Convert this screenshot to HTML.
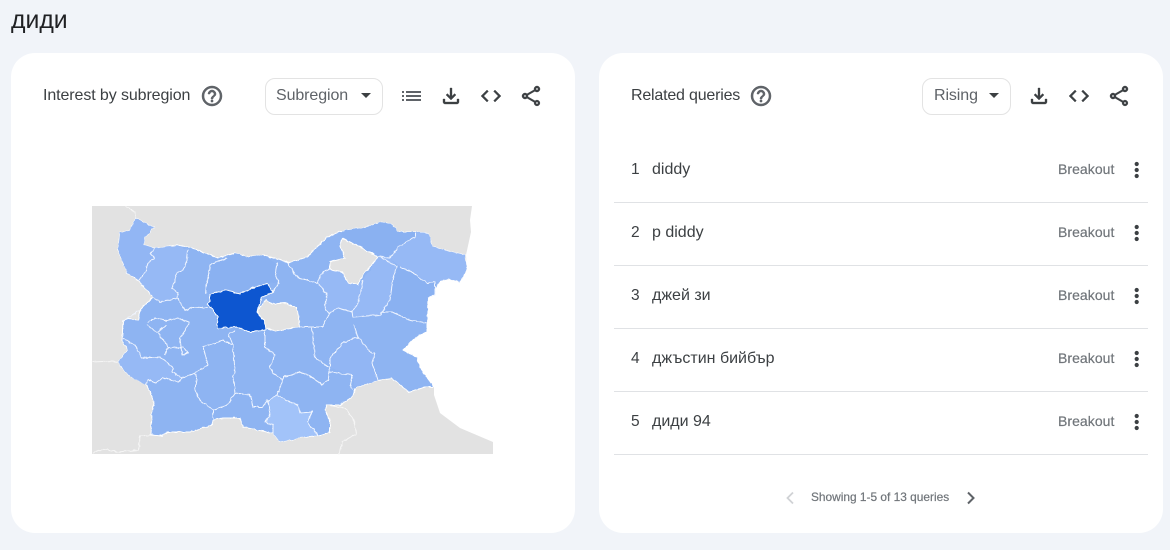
<!DOCTYPE html>
<html><head><meta charset="utf-8">
<style>
html,body{margin:0;padding:0;width:1170px;height:550px;overflow:hidden;background:#f1f4f9;font-family:"Liberation Sans","Noto Sans CJK JP",sans-serif;color:#3c4043}
.a{position:absolute;white-space:nowrap}
.card{position:absolute;top:53px;width:564px;height:480px;background:#fff;border-radius:24px}
.sel{position:absolute;top:78px;height:35px;border:1px solid #e3e3e3;border-radius:10px;background:#fff}
.tri{position:absolute;width:0;height:0;border-left:5px solid transparent;border-right:5px solid transparent;border-top:5px solid #3c4043}
.t{font-size:16px;line-height:20px;color:#3c4043;letter-spacing:-.1px;margin-top:1px}
.hr{position:absolute;left:614px;width:534px;height:1px;background:#e0e2e5}
.br{position:absolute;left:1058px;font-size:14px;line-height:20px;color:#70757a;white-space:nowrap;letter-spacing:.05px;-webkit-text-stroke:.2px #70757a}
.n{position:absolute;left:631px;font-size:15.5px;line-height:20px;color:#3c4043;margin-top:1px}
.q{position:absolute;left:652px;font-size:16px;line-height:20px;color:#3c4043;white-space:nowrap;margin-top:1px}
svg.i{position:absolute;width:24px;height:24px;top:84px}
svg.h path{stroke:#5f6368;stroke-width:.5}
svg.b path{stroke:#3c4043;stroke-width:.35}
</style></head><body>
<div class="a" style="left:11px;top:9px;font-size:24.8px;line-height:24px;color:#202124">диди</div>
<div class="card" style="left:11px"></div>
<div class="card" style="left:599px"></div>

<div class="a t" style="left:43px;top:85px">Interest by subregion</div>
<svg class="i h" style="left:200px" viewBox="0 0 24 24" fill="#5f6368"><path d="M11 18h2v-2h-2v2zm1-16C6.48 2 2 6.48 2 12s4.48 10 10 10 10-4.48 10-10S17.52 2 12 2zm0 18c-4.41 0-8-3.59-8-8s3.59-8 8-8 8 3.59 8 8-3.59 8-8 8zm0-14c-2.21 0-4 1.79-4 4h2c0-1.1.9-2 2-2s2 .9 2 2c0 2-3 1.75-3 5h2c0-2.25 3-2.5 3-5 0-2.21-1.79-4-4-4z"/></svg>
<div class="sel" style="left:265px;width:116px"></div>
<div class="a t" style="left:276px;top:85px;color:#5f6368">Subregion</div>
<div class="tri" style="left:361px;top:93px"></div>
<svg class="a" style="left:402px;top:90px" width="19" height="12" viewBox="0 0 19 12" fill="#5f6368"><rect x="0" y="1" width="2" height="2"/><rect x="4" y="1" width="15" height="2"/><rect x="0" y="5" width="2" height="2"/><rect x="4" y="5" width="15" height="2"/><rect x="0" y="9" width="2" height="2"/><rect x="4" y="9" width="15" height="2"/></svg>
<svg class="i b" style="left:439px" viewBox="0 0 24 24" fill="#3c4043"><path d="M18 15v3H6v-3H4v3c0 1.1.9 2 2 2h12c1.1 0 2-.9 2-2v-3h-2zm-1-4l-1.41-1.41L13 12.17V4h-2v8.17L8.41 9.59 7 11l5 5 5-5z"/></svg>
<svg class="i b" style="left:479px" viewBox="0 0 24 24" fill="#3c4043"><path d="M9.4 16.6L4.8 12l4.6-4.6L8 6l-6 6 6 6 1.4-1.4zm5.2 0l4.6-4.6-4.6-4.6L16 6l6 6-6 6-1.4-1.4z"/></svg>
<svg class="i b" style="left:519px" viewBox="0 0 24 24" fill="#3c4043"><path d="M18 16.08c-.76 0-1.44.3-1.96.77L8.91 12.7c.05-.23.09-.46.09-.7s-.04-.47-.09-.7l7.05-4.11c.54.5 1.25.81 2.04.81 1.66 0 3-1.34 3-3s-1.34-3-3-3-3 1.34-3 3c0 .24.04.47.09.7L8.04 9.81C7.5 9.31 6.79 9 6 9c-1.66 0-3 1.34-3 3s1.34 3 3 3c.79 0 1.5-.31 2.04-.81l7.12 4.16c-.05.21-.08.43-.08.65 0 1.61 1.31 2.92 2.92 2.92 1.61 0 2.92-1.31 2.92-2.92s-1.31-2.92-2.92-2.92zM18 4c.55 0 1 .45 1 1s-.45 1-1 1-1-.45-1-1 .45-1 1-1zM6 13c-.55 0-1-.45-1-1s.45-1 1-1 1 .45 1 1-.45 1-1 1zm12 7.02c-.55 0-1-.45-1-1s.45-1 1-1 1 .45 1 1-.45 1-1 1z"/></svg>

<svg class="a" style="left:0;top:0" width="1170" height="550" viewBox="0 0 1170 550">
<defs>
<filter id="w" x="0" y="0" width="100%" height="100%" filterUnits="userSpaceOnUse" primitiveUnits="userSpaceOnUse">
<feTurbulence type="fractalNoise" baseFrequency=".22" numOctaves="2" seed="4"/>
<feDisplacementMap in="SourceGraphic" scale="3" xChannelSelector="R" yChannelSelector="G"/>
</filter>
</defs>
<polygon fill="#e2e2e2" points="92,206 472,206 470,220 471,232 466,255 467,270 460,282 450,279 440,281 436,288 428,298 427,325 427,332 415,338 403,350 417,357 420,368 434,387 434,395 440,413 460,428 493,442 493,454 92,454"/>
<g fill="none" stroke="#f6f6f6" stroke-width="1" filter="url(#w)">
<polyline points="125,206 135,212 135,218"/>
<polyline points="92,362 112,361 118,362"/>
<polyline points="151,435 140,436 139,450 118,452 105,449 93,453"/>
<polyline points="327,405 345,408 354,420 356,434 342,442 339,454"/>
</g>
<g filter="url(#w)">
<polygon fill="#8eb4f2" stroke="#fff" stroke-width="1" stroke-linejoin="round" points="135,218 154,227 145,237 144,245 155,248 177,245 193,248 218,258 235,253 250,257 263,255 280,260 288,263 307,257 327,237 342,231 367,227 380,222 392,224 398,232 415,232 428,233 433,247 465,255 467,270 460,282 450,279 440,281 436,288 428,298 427,325 427,332 415,338 403,350 417,357 420,368 434,387 425,387 409,392 392,378 378,380 355,388 352,397 340,405 327,405 325,410 330,420 330,432 317,436 300,438 280,442 273,433 257,430 243,427 240,418 223,418 213,420 212,425 190,432 167,432 162,436 151,435 152,413 154,403 147,385 128,375 118,362 128,350 122,342 123,321 128,319 138,320 140,310 153,297 138,280 127,273 118,250 120,233 130,230"/>
<g fill="#96b9f5">
<polygon points="155,248 177,245 188,250 187,260 183,270 177,273 172,288 178,293 177,298 160,302 153,297 139,280 145,273 148,263 155,258 150,253"/>
<polygon points="390,258 398,247 415,237 415,232 428,233 433,247 465,255 467,270 460,282 450,279 440,281 435,282 427,283 412,272 400,267"/>
<polygon points="363,280 378,257 390,258 397,267 393,278 390,300 380,315 353,317 352,312 358,303"/>
<polygon points="318,283 323,272 330,270 342,272 348,283 358,285 363,280 358,303 352,312 338,308 330,313 325,310 327,295"/>
<polygon points="123,338 135,345 142,358 160,357 173,367 172,372 182,378 178,382 163,378 155,383 148,380 146,385 128,375 118,362 128,350"/>
</g>
<polygon fill="#a2c3f9" points="280,398 285,400 298,405 300,413 312,412 307,422 318,435 300,438 280,442 273,433 273,425 265,422 270,415 268,400 277,395"/>
<g fill="#92b6f4">
<polygon points="330,368 330,358 343,343 358,337 370,352 375,353 372,363 377,377 378,380 355,388 352,375 330,368"/>
<polygon points="120,233 130,230 135,218 154,227 145,237 144,245 155,248 150,253 155,258 148,263 145,273 139,280 127,273 118,250"/>
</g>
<g fill="#8ab1f1">
<polygon points="342,231 367,227 380,222 392,224 398,232 415,232 415,237 398,247 390,258 378,257 360,247 342,238"/>
<polygon points="210,265 227,258 235,253 250,257 263,255 277,263 275,275 279,283 267,283 253,288 240,294 227,290 210,294 206,293 208,278"/>
<polygon points="397,267 400,267 412,272 427,283 435,282 435,295 428,298 427,323 410,320 392,312 382,312 390,300 393,278"/>
</g>
<polygon fill="#e2e2e2" stroke="#fff" stroke-width="1" points="342,238 360,247 378,257 363,275 358,285 348,283 342,272 330,270 330,262 345,258 340,245"/>
<polygon fill="#e2e2e2" stroke="#fff" stroke-width="1" points="266,300 272,304 285,303 297,308 300,327 275,331 266,328 258,318 258,310"/>
<polygon fill="#0b57d0" stroke="#fff" stroke-width="1" points="210,294 227,290 240,294 253,288 267,283 273,292 262,297 257,312 265,322 266,330 250,332 237,327 217,328 218,318 212,308 207,304 210,302"/>
<g fill="none" stroke="#f0f5ff" stroke-width="1" stroke-linejoin="round">
<polyline points="155,248 150,253 155,258 148,263 145,273 139,280"/>
<polyline points="188,250 187,260 183,270 177,273 172,288 178,293 177,298 160,302 153,297"/>
<polyline points="177,298 185,310 193,307 208,308"/>
<polyline points="227,258 210,265 208,278 206,293"/>
<polyline points="277,263 275,275 279,283 273,292"/>
<polyline points="288,263 297,277 317,283 323,272 330,270"/>
<polyline points="318,283 327,295 325,310 330,313 322,327 300,327"/>
<polyline points="330,313 338,308 352,312 358,303 363,280"/>
<polyline points="352,312 353,317 380,315 390,300 393,278 397,267 380,257"/>
<polyline points="382,312 392,312 410,320 427,323"/>
<polyline points="400,267 412,272 427,283 435,282 435,295 428,298"/>
<polyline points="378,257 390,258 398,247 415,237 415,232"/>
<polyline points="123,338 135,345 142,358 160,357 173,367 172,372 182,378 178,382 163,378 155,383 148,380 146,385"/>
<polyline points="147,325 160,335 168,347 165,355"/>
<polyline points="168,347 178,348 183,347 188,353 182,355 180,338 188,325"/>
<polyline points="167,325 158,332"/>
<polyline points="147,322 155,318 167,321 178,318 189,322 188,325"/>
<polyline points="123,321 131,316 140,310"/>
<polyline points="182,378 193,374 208,365 203,347 223,340 233,345 229,335 235,330"/>
<polyline points="233,345 235,372 233,377 235,393 227,405 213,410 200,400 195,390 197,375 193,374"/>
<polyline points="213,410 213,420"/>
<polyline points="235,393 250,395 253,407 262,407 268,400 277,395 283,380 273,373 270,367 275,355 265,347 265,330"/>
<polyline points="268,400 270,415 265,422 273,425 273,433"/>
<polyline points="312,328 315,358 330,368"/>
<polyline points="330,368 330,358 343,343 358,337 354,325"/>
<polyline points="358,337 370,352 375,353 372,363 377,377 378,380"/>
<polyline points="330,368 328,380 322,385 312,377 300,372 292,375 283,377 283,380"/>
<polyline points="330,372 352,375 350,385 353,390"/>
<polyline points="277,395 285,400 298,405 300,413 312,412 307,422 318,435"/>
</g>
</g>
</svg>

<div class="a t" style="left:631px;top:85px;letter-spacing:-.2px">Related queries</div>
<svg class="i h" style="left:749px" viewBox="0 0 24 24" fill="#5f6368"><path d="M11 18h2v-2h-2v2zm1-16C6.48 2 2 6.48 2 12s4.48 10 10 10 10-4.48 10-10S17.52 2 12 2zm0 18c-4.41 0-8-3.59-8-8s3.59-8 8-8 8 3.59 8 8-3.59 8-8 8zm0-14c-2.21 0-4 1.79-4 4h2c0-1.1.9-2 2-2s2 .9 2 2c0 2-3 1.75-3 5h2c0-2.25 3-2.5 3-5 0-2.21-1.79-4-4-4z"/></svg>
<div class="sel" style="left:922px;width:87px"></div>
<div class="a t" style="left:934px;top:85px;color:#5f6368">Rising</div>
<div class="tri" style="left:989px;top:93px"></div>
<svg class="i b" style="left:1027px" viewBox="0 0 24 24" fill="#3c4043"><path d="M18 15v3H6v-3H4v3c0 1.1.9 2 2 2h12c1.1 0 2-.9 2-2v-3h-2zm-1-4l-1.41-1.41L13 12.17V4h-2v8.17L8.41 9.59 7 11l5 5 5-5z"/></svg>
<svg class="i b" style="left:1067px" viewBox="0 0 24 24" fill="#3c4043"><path d="M9.4 16.6L4.8 12l4.6-4.6L8 6l-6 6 6 6 1.4-1.4zm5.2 0l4.6-4.6-4.6-4.6L16 6l6 6-6 6-1.4-1.4z"/></svg>
<svg class="i b" style="left:1107px" viewBox="0 0 24 24" fill="#3c4043"><path d="M18 16.08c-.76 0-1.44.3-1.96.77L8.91 12.7c.05-.23.09-.46.09-.7s-.04-.47-.09-.7l7.05-4.11c.54.5 1.25.81 2.04.81 1.66 0 3-1.34 3-3s-1.34-3-3-3-3 1.34-3 3c0 .24.04.47.09.7L8.04 9.81C7.5 9.31 6.79 9 6 9c-1.66 0-3 1.34-3 3s1.34 3 3 3c.79 0 1.5-.31 2.04-.81l7.12 4.16c-.05.21-.08.43-.08.65 0 1.61 1.31 2.92 2.92 2.92 1.61 0 2.92-1.31 2.92-2.92s-1.31-2.92-2.92-2.92zM18 4c.55 0 1 .45 1 1s-.45 1-1 1-1-.45-1-1 .45-1 1-1zM6 13c-.55 0-1-.45-1-1s.45-1 1-1 1 .45 1 1-.45 1-1 1zm12 7.02c-.55 0-1-.45-1-1s.45-1 1-1 1 .45 1 1-.45 1-1 1z"/></svg>

<div class="n" style="top:159px">1</div><div class="q" style="top:159px">diddy</div><div class="br" style="top:159px">Breakout</div>
<div class="hr" style="top:202px"></div>
<div class="n" style="top:222px">2</div><div class="q" style="top:222px">p diddy</div><div class="br" style="top:222px">Breakout</div>
<div class="hr" style="top:265px"></div>
<div class="n" style="top:285px">3</div><div class="q" style="top:285px">джей зи</div><div class="br" style="top:285px">Breakout</div>
<div class="hr" style="top:328px"></div>
<div class="n" style="top:348px">4</div><div class="q" style="top:348px">джъстин бийбър</div><div class="br" style="top:348px">Breakout</div>
<div class="hr" style="top:391px"></div>
<div class="n" style="top:411px">5</div><div class="q" style="top:411px">диди 94</div><div class="br" style="top:411px">Breakout</div>
<div class="hr" style="top:454px"></div>

<svg class="a" style="left:1130px;top:0" width="14" height="440" viewBox="0 0 14 440" fill="#3c4043">
<circle cx="6.7" cy="164" r="2.1"/><circle cx="6.7" cy="170" r="2.1"/><circle cx="6.7" cy="176" r="2.1"/>
<circle cx="6.7" cy="227" r="2.1"/><circle cx="6.7" cy="233" r="2.1"/><circle cx="6.7" cy="239" r="2.1"/>
<circle cx="6.7" cy="290" r="2.1"/><circle cx="6.7" cy="296" r="2.1"/><circle cx="6.7" cy="302" r="2.1"/>
<circle cx="6.7" cy="353" r="2.1"/><circle cx="6.7" cy="359" r="2.1"/><circle cx="6.7" cy="365" r="2.1"/>
<circle cx="6.7" cy="416" r="2.1"/><circle cx="6.7" cy="422" r="2.1"/><circle cx="6.7" cy="428" r="2.1"/>
</svg>

<svg class="a" style="left:784px;top:491px" width="12" height="14" viewBox="0 0 12 14"><polyline points="9,1.5 3.5,7 9,12.5" fill="none" stroke="#d0d2d5" stroke-width="1.8"/></svg>
<div class="a" style="left:811px;top:489px;font-size:11.9px;line-height:16px;color:#70757a;-webkit-text-stroke:.2px #70757a">Showing 1-5 of 13 queries</div>
<svg class="a" style="left:965px;top:491px" width="12" height="14" viewBox="0 0 12 14"><polyline points="3,1.5 8.5,7 3,12.5" fill="none" stroke="#5f6368" stroke-width="2"/></svg>
</body></html>
